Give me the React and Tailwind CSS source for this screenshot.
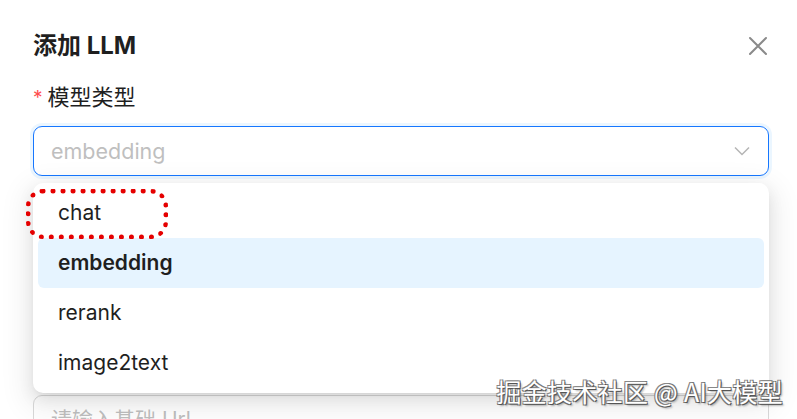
import React from "react";

const font = { fontFamily: '"Inter", "Noto Sans CJK SC", sans-serif' };

export default function App() {
  return (
    <div className="relative w-[797px] h-[419px] overflow-hidden bg-white" style={font}>
      <div className="pl-[33px] pr-[28px] pt-[30px]">
        <div className="flex items-center justify-between h-[32px]">
          <h1 className="text-[24px] font-bold text-[#1f1f1f] leading-[32px]">添加 LLM</h1>
          <button className="mr-[-3px] w-[28px] h-[28px] flex items-center justify-center">
            <svg width="20" height="20" viewBox="0 0 20 20" fill="none">
              <path d="M2 2L18 18M18 2L2 18" stroke="#8a8a8a" strokeWidth="2" strokeLinecap="round" />
            </svg>
          </button>
        </div>
        <div className="mt-[19px] h-[32px] flex items-center text-[22px] text-[#1f1f1f]">
          <span className="text-[#ff4d4f] text-[19px] mr-[5px] mt-[3px]">*</span>
          <span>模型类型</span>
        </div>
        <div className="relative mt-[13px]">
          <div className="h-[50px] rounded-[9px] border-[1.5px] border-[#1677ff] shadow-[0_0_0_3px_rgba(5,145,255,0.08)] flex items-center justify-between pl-[17px] pr-[18px]">
            <span className="text-[21.5px] text-[#bfbfbf]">embedding</span>
            <svg width="16" height="10" viewBox="0 0 16 10" fill="none">
              <path d="M1 1.5L8 8.5L15 1.5" stroke="#b5b5b5" strokeWidth="1.5" />
            </svg>
          </div>

          <div className="mt-[39px] h-[32px]" />
          <div className="mt-[13px] h-[50px] rounded-[9px] border border-[#d9d9d9]" />
          <div className="mt-[39px] h-[32px]" />
          <div className="mt-[14px] h-[50px] rounded-[9px] border border-[#d9d9d9] flex items-center pl-[17px]">
            <span className="text-[21px] text-[#bfbfbf]">请输入基础 Url</span>
          </div>

          <div className="absolute left-0 right-0 top-[57px] bg-white rounded-[10px] p-[5px] shadow-[0_6px_16px_0_rgba(0,0,0,0.08),0_3px_6px_-4px_rgba(0,0,0,0.12),0_9px_28px_8px_rgba(0,0,0,0.07)]">
            <div className="h-[50px] flex items-center pl-[20px] text-[21px] text-[#1f1f1f] rounded-[6px]">chat</div>
            <div className="h-[50px] flex items-center pl-[20px] text-[21px] font-semibold text-[#1f1f1f] bg-[#e6f4ff] rounded-[6px]">embedding</div>
            <div className="h-[50px] flex items-center pl-[20px] text-[21px] text-[#1f1f1f] rounded-[6px]">rerank</div>
            <div className="h-[50px] flex items-center pl-[20px] text-[21px] text-[#1f1f1f] rounded-[6px]">image2text</div>
          </div>
        </div>
      </div>

      <div className="absolute left-[26px] top-[189px] w-[142px] h-[50px] rounded-[17px] border-[5px] border-dotted border-[#e50000]" />

      <div
        className="absolute right-[14px] top-[376px] text-[25px] leading-[31px] text-white tracking-[0.3px]"
        style={{ fontFamily: '"Noto Sans CJK SC", sans-serif', textShadow: "1px 1px 0 #555, -1px -1px 0 #888, 1px -1px 0 #777, -1px 1px 0 #777, 2px 2px 2px rgba(0,0,0,0.3)" }}
      >
        掘金技术社区 @ AI大模型
      </div>
    </div>
  );
}
